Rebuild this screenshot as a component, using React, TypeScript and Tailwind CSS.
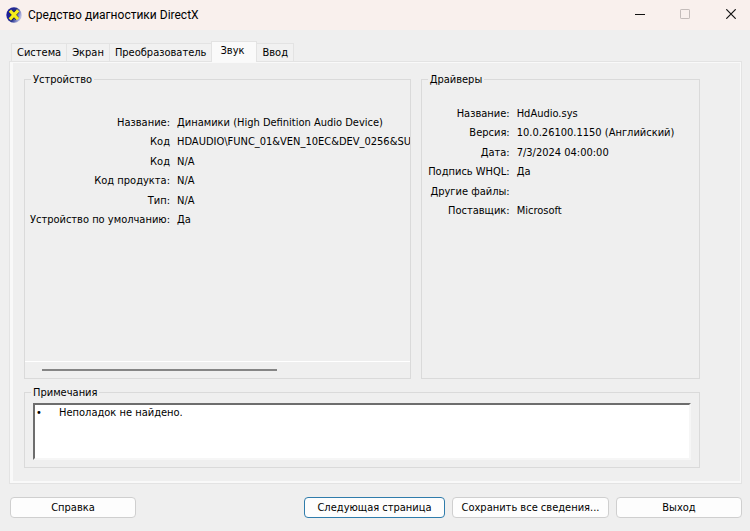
import React, { useState } from "react";

const tabs = ["Система", "Экран", "Преобразователь", "Звук", "Ввод"];

const device = [
  ["Название:", "Динамики (High Definition Audio Device)"],
  ["Код", "HDAUDIO\\FUNC_01&VEN_10EC&DEV_0256&SUB"],
  ["Код", "N/A"],
  ["Код продукта:", "N/A"],
  ["Тип:", "N/A"],
  ["Устройство по умолчанию:", "Да"],
];

const drivers = [
  ["Название:", "HdAudio.sys"],
  ["Версия:", "10.0.26100.1150 (Английский)"],
  ["Дата:", "7/3/2024 04:00:00"],
  ["Подпись WHQL:", "Да"],
  ["Другие файлы:", ""],
  ["Поставщик:", "Microsoft"],
];

const DirectXIcon = () => (
  <svg viewBox="0 0 16 16" className="size-4 shrink-0" aria-hidden="true">
    <defs>
      <linearGradient id="ball" x1="0" y1="0.3" x2="1" y2="0.7">
        <stop offset="0" stopColor="#1a1a9c" />
        <stop offset="0.5" stopColor="#26308f" />
        <stop offset="0.9" stopColor="#b4b8e2" />
      </linearGradient>
    </defs>
    <circle cx="8" cy="8" r="7.7" fill="url(#ball)" />
    <path d="M4.4 4.4 11.4 11.6M11.4 4.2 4.6 11.8" stroke="#14143c" strokeWidth="4.2" />
    <path d="M3.9 3.7 12 12.2M12.2 3.4 3.8 12.4" stroke="#f6ee1c" strokeWidth="3.2" />
  </svg>
);

function Group({ title, className = "", children }: { title: string; className?: string; children: React.ReactNode }) {
  return (
    <fieldset className={`flex min-w-0 flex-col border border-[#dadada] ${className}`}>
      <legend className="ml-1.5 h-3.5 px-0.5 leading-4">{title}</legend>
      {children}
    </fieldset>
  );
}

function Rows({ items, labelClass }: { items: string[][]; labelClass: string }) {
  return (
    <dl className="overflow-hidden whitespace-nowrap">
      {items.map(([label, value], i) => (
        <div key={i} className="flex items-center gap-[7px] odd:h-5 even:h-[19px]">
          <dt className={`shrink-0 text-right ${labelClass}`}>{label}</dt>
          <dd>{value}</dd>
        </div>
      ))}
    </dl>
  );
}

function PushButton({ className = "", children }: { className?: string; children: React.ReactNode }) {
  return (
    <button
      type="button"
      className={`h-[21px] rounded-sm border bg-[#fdfdfd] text-center leading-4 whitespace-nowrap ${className}`}
    >
      {children}
    </button>
  );
}

export default function App() {
  const [active, setActive] = useState("Звук");

  return (
    <div className="flex min-h-screen flex-col bg-[#efefef] font-['DejaVu_Sans_Condensed','DejaVu_Sans',sans-serif] text-[11px] text-black">
      <header className="flex h-[30px] items-center bg-[#f9f0ed] pl-1.5">
        <DirectXIcon />
        <h1 className="ml-1.5 flex-1 font-[Roboto,sans-serif] text-xs">Средство диагностики DirectX</h1>
        <button type="button" aria-label="Свернуть" className="flex h-full w-9 items-center justify-center">
          <svg viewBox="0 0 10 10" className="size-2.5">
            <path d="M0 4.5h10" stroke="#111" />
          </svg>
        </button>
        <button type="button" aria-label="Развернуть" disabled className="flex h-full w-[54px] items-center justify-center pb-0.5">
          <svg viewBox="0 0 10 10" className="size-2.5">
            <rect x="0.5" y="0.5" width="9" height="9" rx="0.6" fill="none" stroke="#c4bcba" />
          </svg>
        </button>
        <button type="button" aria-label="Закрыть" className="flex h-full w-[38px] items-center justify-center pb-0.5">
          <svg viewBox="0 0 10 10" className="size-2.5">
            <path d="M0.3 0.3 9.7 9.7M9.7 0.3 0.3 9.7" stroke="#111" strokeWidth="1.2" />
          </svg>
        </button>
      </header>

      <main className="flex flex-1 flex-col pt-[11px] pr-2 pb-[13px] pl-[9px]">
        <div role="tablist" className="relative z-10 ml-0.5 flex h-[21px] items-end">
          {tabs.map((tab) => (
            <button
              key={tab}
              type="button"
              role="tab"
              aria-selected={tab === active}
              onClick={() => setActive(tab)}
              className={
                tab === active
                  ? "h-[21px] border border-b-0 border-[#e3e3e3] bg-[#fafafa] pr-3 pb-0.5 pl-2 leading-4"
                  : "h-[19px] border border-r-0 border-[#e3e3e3] bg-[#f1f1f1] px-[5px] leading-4 last:border-r last:border-l-0"
              }
            >
              {tab}
            </button>
          ))}
        </div>

        <section className="-mt-px flex flex-1 flex-col border border-[#e3e3e3]">
          <div className="flex flex-1 flex-col border-t border-r border-b-2 border-l-[3px] border-[#f9f9f9] pt-[9px] pr-10 pb-[13px] pl-[11px]">
            <div className="flex flex-1 gap-2.5">
              <Group title="Устройство" className="flex-[387]">
                <div className="flex flex-1 flex-col justify-between pt-[27px]">
                  <Rows items={device} labelClass="w-[145px]" />
                  <div className="h-[17px] border-t border-white pt-[7px] pl-[17px]">
                    <div className="h-0.5 w-[64%] bg-[#858585]" />
                  </div>
                </div>
              </Group>
              <Group title="Драйверы" className="flex-[279]">
                <div className="pt-[18px]">
                  <Rows items={drivers} labelClass="w-[88px]" />
                </div>
              </Group>
            </div>

            <Group title="Примечания" className="mt-1.5">
              <textarea
                readOnly
                aria-label="Примечания"
                defaultValue={"•\tНеполадок не найдено."}
                className="mx-2 mt-1 mb-[7px] h-[57px] resize-none border-2 border-t-[#6d6d6d] border-r-[#f6f6f6] border-b-[#f6f6f6] border-l-[#6d6d6d] bg-white px-px leading-4 outline-none [tab-size:23px]"
              />
            </Group>
          </div>
        </section>

        <footer className="mt-[13px] flex gap-[7px] pl-px">
          <PushButton className="mr-auto w-[126px] border-[#cfcfcf]">Справка</PushButton>
          <PushButton className="w-[141px] border-[#2f7cab]">Следующая страница</PushButton>
          <PushButton className="w-[157px] border-[#cfcfcf]">Сохранить все сведения...</PushButton>
          <PushButton className="w-[126px] border-[#cfcfcf]">Выход</PushButton>
        </footer>
      </main>
    </div>
  );
}
